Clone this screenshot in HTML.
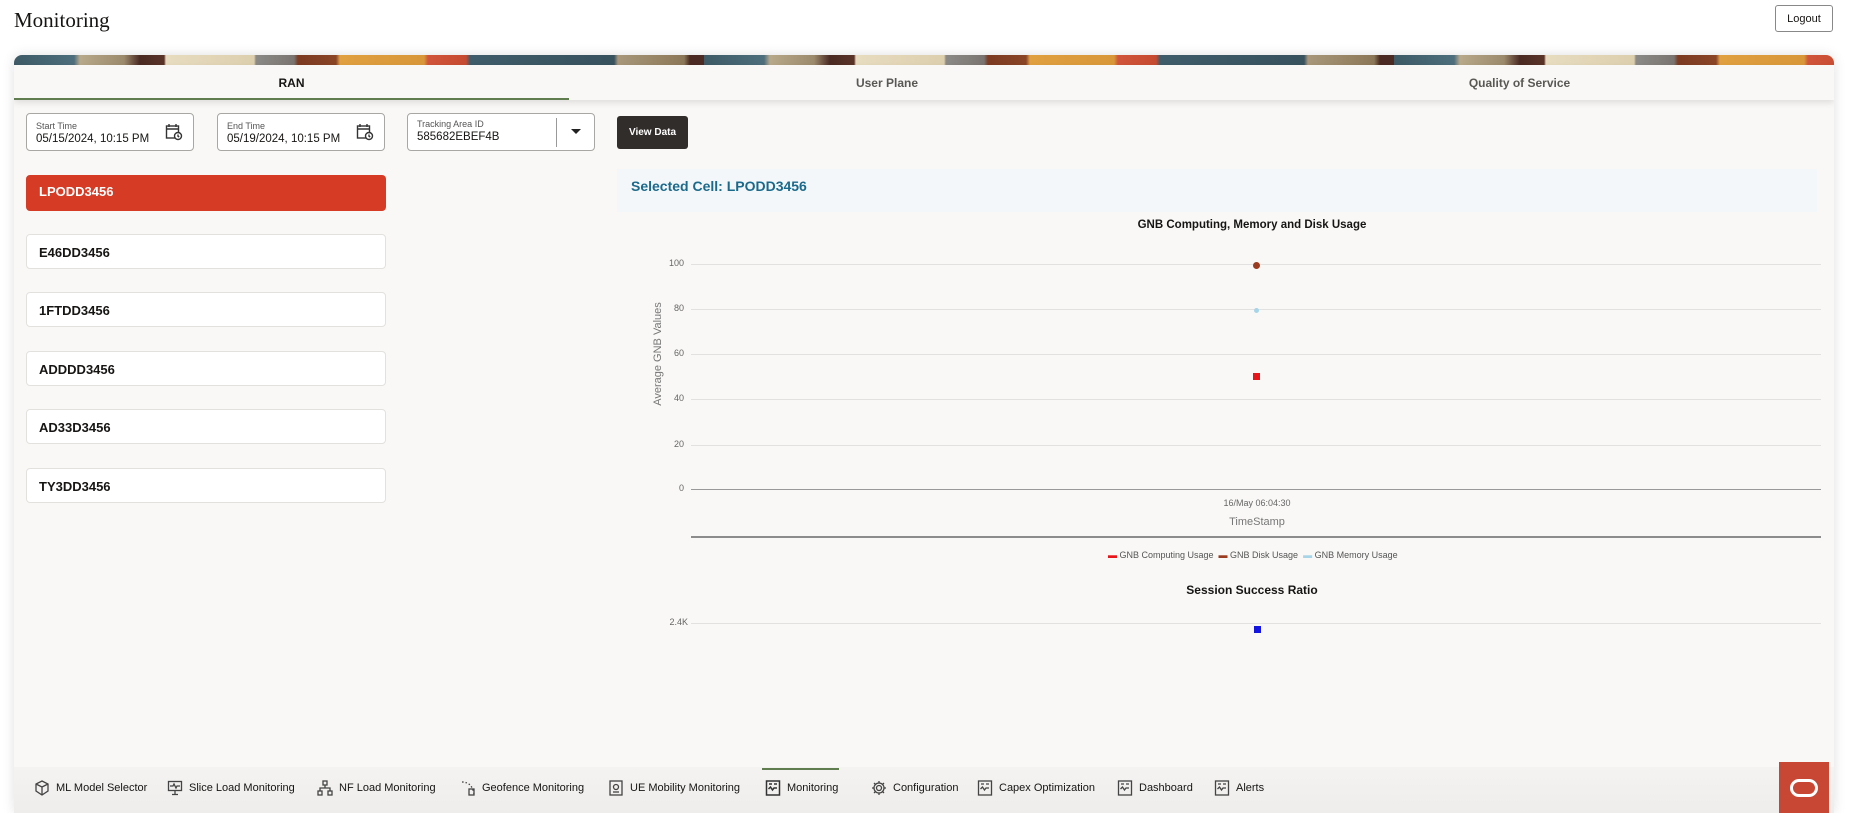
<!DOCTYPE html>
<html><head><meta charset="utf-8"><style>
*{box-sizing:border-box;margin:0;padding:0}
body{width:1850px;height:813px;overflow:hidden;background:#fff;font-family:"Liberation Sans",sans-serif;position:relative;color:#161513}
.abs{position:absolute}
.title{left:14px;top:8px;font-family:"Liberation Serif",serif;font-size:21px;color:#161513}
.logout{left:1775px;top:5px;width:58px;height:27px;border:1px solid #888;border-radius:3px;font-size:11px;display:flex;align-items:center;justify-content:center;background:#fff}
.card{left:14px;top:55px;width:1820px;height:758px;background:#f9f8f6;border-radius:8px 8px 0 0;overflow:hidden;box-shadow:0 0 12px rgba(0,0,0,.12)}
.banner{left:0;top:0;width:1820px;height:10px;background:repeating-linear-gradient(90deg,#3d5a66 0,#4d6e7c 60px,#b8a98a 66px,#9c8a6c 110px,#4a2a22 126px,#5a3328 150px,#e8dcc0 152px,#dccfae 240px,#8b8a86 242px,#7a7470 280px,#7c3b22 284px,#8a4426 322px,#e0a040 326px,#d8983a 410px,#d0553a 414px,#c64a30 452px,#3f5c6a 456px,#38525e 600px,#a8977a 604px,#8c7858 670px,#4a2a22 676px,#4a2a22 690px)}
.tabs{left:0;top:10px;width:1820px;height:35px;background:#f9f8f6;box-shadow:0 3px 6px rgba(0,0,0,.1)}
.tab{position:absolute;top:0;height:35px;display:flex;align-items:center;justify-content:center;font-size:12px;font-weight:bold;color:#5a5855}
.field{top:58px;height:38px;border:1px solid #a9a7a3;border-radius:4px;background:#fff}
.field .l{position:absolute;left:9px;top:7px;font-size:9px;color:#555}
.field .v{position:absolute;left:9px;top:19px;font-size:11.5px;color:#161513}
.cell{left:12px;width:360px;height:35px;border:1px solid #e3e1de;border-radius:4px;background:#fff;font-size:13px;font-weight:bold;padding:10px 0 0 12px}
.nav{left:0;top:712px;width:1820px;height:46px;background:linear-gradient(#f4f3f1,#efedeb)}
.ni{position:absolute;top:13px;font-size:11px;color:#161513;display:flex;align-items:center;gap:6px}
.gl{position:absolute;left:677px;height:1px;background:#e2e1df;width:1130px}
.yl{position:absolute;font-size:9px;color:#666;text-align:right;width:40px}
</style></head><body>
<div class="abs title">Monitoring</div>
<div class="abs logout">Logout</div>
<div class="abs card">
 <div class="abs banner"></div>
 <div class="abs tabs">
  <div class="tab" style="left:0;width:555px;color:#161513">RAN</div>
  <div class="abs" style="left:0;top:33px;width:555px;height:2px;background:#5f7d4f"></div>
  <div class="tab" style="left:555px;width:636px">User Plane</div>
  <div class="tab" style="left:1191px;width:629px">Quality of Service</div>
 </div>
 <div class="abs field" style="left:12px;width:168px"><div class="l">Start Time</div><div class="v">05/15/2024, 10:15 PM</div>
  <svg class="abs" style="left:138px;top:9px" width="18" height="18" viewBox="0 0 18 18" fill="none" stroke="#333" stroke-width="1.4"><rect x="1.5" y="3" width="12" height="12"/><path d="M4 1v3M11 1v3M1.5 6h12"/><circle cx="13" cy="13" r="3.5" fill="#fff"/><path d="M13 11.5v1.7l1.2.8"/></svg></div>
 <div class="abs field" style="left:203px;width:168px"><div class="l">End Time</div><div class="v">05/19/2024, 10:15 PM</div>
  <svg class="abs" style="left:138px;top:9px" width="18" height="18" viewBox="0 0 18 18" fill="none" stroke="#333" stroke-width="1.4"><rect x="1.5" y="3" width="12" height="12"/><path d="M4 1v3M11 1v3M1.5 6h12"/><circle cx="13" cy="13" r="3.5" fill="#fff"/><path d="M13 11.5v1.7l1.2.8"/></svg></div>
 <div class="abs field" style="left:393px;width:188px"><div class="l" style="top:5px">Tracking Area ID</div><div class="v" style="top:17px">585682EBEF4B</div>
  <div class="abs" style="left:148px;top:4px;width:1px;height:29px;background:#999"></div>
  <div class="abs" style="left:163px;top:15px;width:0;height:0;border-left:5px solid transparent;border-right:5px solid transparent;border-top:5px solid #222"></div></div>
 <div class="abs" style="left:603px;top:61px;width:71px;height:33px;background:#312d2a;border-radius:3px;color:#fff;font-size:10px;font-weight:bold;display:flex;align-items:center;justify-content:center">View Data</div>

 <div class="abs cell" style="top:120px;background:#d63b25;border-color:#d63b25;color:#fff;height:36px;padding-top:8px">LPODD3456</div>
 <div class="abs cell" style="top:179px">E46DD3456</div>
 <div class="abs cell" style="top:237px">1FTDD3456</div>
 <div class="abs cell" style="top:296px">ADDDD3456</div>
 <div class="abs cell" style="top:354px">AD33D3456</div>
 <div class="abs cell" style="top:413px">TY3DD3456</div>

 <div class="abs" style="left:603px;top:114px;width:1200px;height:43px;background:#f4f7f9"></div>
 <div class="abs" style="left:617px;top:123px;font-size:14px;font-weight:bold;color:#1b6a8c">Selected Cell: LPODD3456</div>
 <div class="abs" style="left:1038px;top:164px;width:400px;text-align:center;font-size:11.5px;font-weight:bold">GNB Computing, Memory and Disk Usage</div>
 <div class="gl" style="top:209px"></div><div class="gl" style="top:254px"></div><div class="gl" style="top:299px"></div><div class="gl" style="top:344px"></div><div class="gl" style="top:390px"></div>
 <div class="gl" style="top:434px;background:#999"></div>
 <div class="yl" style="left:630px;top:203px">100</div><div class="yl" style="left:630px;top:248px">80</div><div class="yl" style="left:630px;top:293px">60</div><div class="yl" style="left:630px;top:338px">40</div><div class="yl" style="left:630px;top:384px">20</div><div class="yl" style="left:630px;top:428px">0</div>
 <div class="abs" style="left:584px;top:293px;width:120px;text-align:center;font-size:11px;color:#777;transform:rotate(-90deg)">Average GNB Values</div>
 <div class="abs" style="left:1239px;top:207px;width:7px;height:7px;border-radius:50%;background:#9b3b1f"></div>
 <div class="abs" style="left:1240px;top:253px;width:5px;height:5px;border-radius:50%;background:#a8d4e8"></div>
 <div class="abs" style="left:1239px;top:318px;width:7px;height:7px;background:#e8161a"></div>
 <div class="abs" style="left:1143px;top:443px;width:200px;text-align:center;font-size:9px;color:#666">16/May 06:04:30</div>
 <div class="abs" style="left:1143px;top:461px;width:200px;text-align:center;font-size:11px;color:#777">TimeStamp</div>
 <div class="abs" style="left:677px;top:481px;width:1130px;height:2px;background:#8c8c8c"></div>
 <div class="abs" style="left:1094px;top:495px;font-size:9px;color:#555;white-space:nowrap"><span style="color:#e8161a">▬</span> GNB Computing Usage &nbsp;<span style="color:#9b3b1f">▬</span> GNB Disk Usage &nbsp;<span style="color:#a8d4e8">▬</span> GNB Memory Usage</div>
 <div class="abs" style="left:1038px;top:528px;width:400px;text-align:center;font-size:12px;font-weight:bold">Session Success Ratio</div>
 <div class="gl" style="top:568px"></div>
 <div class="yl" style="left:634px;top:562px">2.4K</div>
 <div class="abs" style="left:1240px;top:571px;width:7px;height:7px;background:#1414e0"></div>

 <div class="abs nav">
  <div class="ni" style="left:20px"><svg width="16" height="16" viewBox="0 0 16 16" fill="none" stroke="#444" stroke-width="1.3"><path d="M8 1l6 3v7l-6 4-6-4V4z M2 4l6 3 6-3M8 7v8"/></svg>ML Model Selector</div>
  <div class="ni" style="left:153px"><svg width="16" height="16" viewBox="0 0 16 16" fill="none" stroke="#444" stroke-width="1.3"><rect x="1.5" y="1.5" width="13" height="9"/><path d="M3 6h3l1-2 2 4 1-2h3M8 11v3M5 14.5h6"/></svg>Slice Load Monitoring</div>
  <div class="ni" style="left:303px"><svg width="16" height="16" viewBox="0 0 16 16" fill="none" stroke="#444" stroke-width="1.3"><rect x="6" y="1" width="4" height="4"/><rect x="1" y="11" width="4" height="4"/><rect x="11" y="11" width="4" height="4"/><path d="M8 5v3M3 11V8h10v3"/></svg>NF Load Monitoring</div>
  <div class="ni" style="left:446px"><svg width="16" height="16" viewBox="0 0 16 16" fill="none" stroke="#444" stroke-width="1.3" stroke-dasharray="1.5 2"><path d="M2 2q10 0 12 12"/><rect x="9" y="9" width="5" height="6" stroke-dasharray="none"/></svg>Geofence Monitoring</div>
  <div class="ni" style="left:594px"><svg width="16" height="16" viewBox="0 0 16 16" fill="none" stroke="#444" stroke-width="1.3"><rect x="2" y="1" width="12" height="14"/><circle cx="8" cy="7" r="2.5"/><path d="M5 12h6"/></svg>UE Mobility Monitoring</div>
  <div class="abs" style="left:748px;top:1px;width:77px;height:2px;background:#5f7d4f"></div>
  <div class="ni" style="left:751px"><svg width="16" height="16" viewBox="0 0 16 16" fill="none" stroke="#333" stroke-width="1.5"><rect x="1.5" y="1" width="13" height="14"/><path d="M4 4h3M9 4h3M3.5 9l2-2 2 3 1.5-2h3"/></svg>Monitoring</div>
  <div class="ni" style="left:857px"><svg width="16" height="16" viewBox="0 0 16 16" fill="none" stroke="#444" stroke-width="1.3"><circle cx="8" cy="8" r="2.5"/><path d="M8 1v2.5M8 12.5V15M1 8h2.5M12.5 8H15M3 3l1.8 1.8M11.2 11.2L13 13M13 3l-1.8 1.8M4.8 11.2L3 13"/><circle cx="8" cy="8" r="5"/></svg>Configuration</div>
  <div class="ni" style="left:963px"><svg width="16" height="16" viewBox="0 0 16 16" fill="none" stroke="#444" stroke-width="1.3"><rect x="1.5" y="1" width="13" height="14"/><path d="M4 4h3M9 4h3M3.5 9l2-2 2 3 1.5-2h3"/></svg>Capex Optimization</div>
  <div class="ni" style="left:1103px"><svg width="16" height="16" viewBox="0 0 16 16" fill="none" stroke="#444" stroke-width="1.3"><rect x="1.5" y="1" width="13" height="14"/><path d="M4 4h3M9 4h3M3.5 9l2-2 2 3 1.5-2h3"/></svg>Dashboard</div>
  <div class="ni" style="left:1200px"><svg width="16" height="16" viewBox="0 0 16 16" fill="none" stroke="#444" stroke-width="1.3"><rect x="1.5" y="1" width="13" height="14"/><path d="M4 4h3M9 4h3M3.5 9l2-2 2 3 1.5-2h3"/></svg>Alerts</div>
 </div>
</div>
<div class="abs" style="left:1779px;top:762px;width:50px;height:51px;background:#c74634;display:flex;align-items:center;justify-content:center"><div style="width:28px;height:18px;border:3.5px solid #fff;border-radius:9px"></div></div>
</body></html>
